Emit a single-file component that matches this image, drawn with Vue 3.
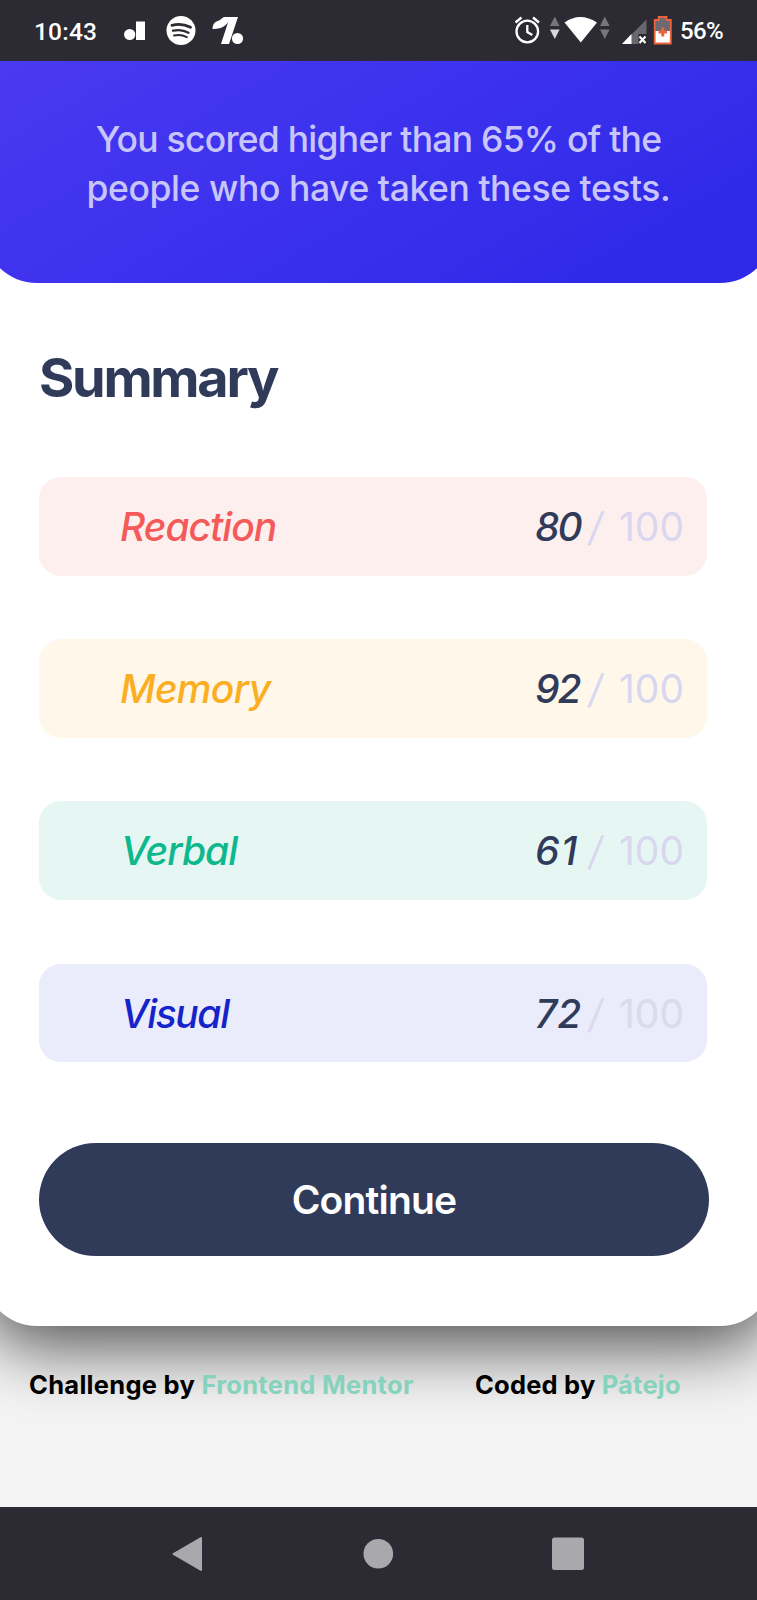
<script setup>
const rows = [
  { name: 'Reaction', score: 80, key: 'reaction' },
  { name: 'Memory', score: 92, key: 'memory' },
  { name: 'Verbal', score: 61, key: 'verbal' },
  { name: 'Visual', score: 72, key: 'visual' },
]
</script>

<template>
  <div class="phone">
    <header class="status">
      <span class="clock">10:43</span>
      <svg class="notif" width="130" height="61" viewBox="0 0 130 61" fill="#fff">
        <circle cx="9.7" cy="34.5" r="5.6" />
        <rect x="16" y="21.5" width="9" height="18.5" />
        <circle cx="61" cy="30.5" r="14.5" />
        <g fill="none" stroke="#2c2a32" stroke-linecap="round">
          <path d="M52 25.3q9.500-2.600 18.500 2" stroke-width="2.800" />
          <path d="M53 30.700q8.500-2 15.500 2" stroke-width="2.300" />
          <path d="M54 35.500q7-1.500 12.800 1.700" stroke-width="1.900" />
        </g>
        <path d="M109.800 17h8.200l-9 27h-8z" />
        <path d="M92.500 29c.3-6 3-7.500 6.500-8.500 2.500-.8 3-3.500 6-3.500h6c-3 7.500-8 12.200-18.500 12z" />
        <circle cx="117.500" cy="38.500" r="5.600" />
      </svg>
      <svg class="system" width="164" height="61" viewBox="0 0 164 61">
        <g fill="none" stroke="#fff" stroke-width="2.300">
          <circle cx="17.300" cy="31.500" r="10.800" />
          <path d="M17.300 25v7l5 3M5.500 22.500l6-5M23 17.500l6 5" />
        </g>
        <path d="M40 26l4.800-9.500 4.800 9.500z" fill="#77767c" />
        <path d="M40 29.500l4.800 9.500 4.800-9.500z" fill="#d9d9dc" />
        <path d="M54.500 22.500q15.500-11 32.500 0L70.800 42.500z" fill="#fff" />
        <path d="M90 26l4.800-9.500 4.800 9.500zM90 29.500l4.800 9.500 4.800-9.500z" fill="#77767c" />
        <path d="M112 44l24.500-24.500V34h-8v10z" fill="#68676d" />
        <path d="M112 44l9.500-10v10z" fill="#fff" />
        <path d="M129.500 36.500l6 6.500m0-6.500l-6 6.500" stroke="#fff" stroke-width="2.100" />
        <path d="M144.500 20h4v-3h8v3h4.500v24h-16.500z" fill="#6c6a70" />
        <path d="M145 31h16v13h-16z" fill="#fff" />
        <path d="M144.700 20h4v-3.200h7.800V20h4.300v23.500h-16.100z" fill="none" stroke="#f0623c" stroke-width="1.800" />
        <path d="M148.500 32h8.500M152.700 27.500v9" stroke="#f0623c" stroke-width="3" />
      </svg>
      <span class="percent">56%</span>
    </header>

    <main class="card">
      <section class="result">
        <p class="l1">You scored higher than 65% of the</p>
        <p class="l2">people who have taken these tests.</p>
      </section>
      <section class="summary">
        <h1>Summary</h1>
        <ul>
          <li v-for="row in rows" :key="row.key" :class="row.key">
            <span class="name">{{ row.name }}</span>
            <span class="score">{{ row.score }}</span>
            <span class="slash">/</span>
            <span class="total">100</span>
          </li>
        </ul>
        <button type="button">Continue</button>
      </section>
    </main>

    <footer class="credits">
      <p class="challenge">Challenge by <a>Frontend Mentor</a></p>
      <p class="coder">Coded by <a>Pátejo</a></p>
    </footer>

    <nav class="navbar">
      <svg width="757" height="93" viewBox="0 0 757 93" fill="#a9a8ac">
        <path d="M173.500 47L201 31v32z" stroke="#a9a8ac" stroke-width="2" stroke-linejoin="round" />
        <circle cx="378.300" cy="46.700" r="14.800" />
        <rect x="552" y="30.500" width="32" height="32.500" rx="2.500" />
      </svg>
    </nav>
  </div>
</template>

<style>
body { margin: 0; background: #f4f4f4; }
</style>

<style scoped>
.phone {
  width: 757px;
  height: 1600px;
  display: flex;
  flex-direction: column;
  overflow: hidden;
  background: #f4f4f4;
  font-family: Inter, "Liberation Sans", sans-serif;
}
p, h1, ul { margin: 0; padding: 0; }
.status {
  z-index: 1;
  flex: none;
  height: 61px;
  display: flex;
  background: #2c2a32;
  color: #fff;
  font: 500 24.500px/63px Roboto, sans-serif;
}
.clock { width: 86px; padding-left: 34px; letter-spacing: .2px; }
.notif { flex: none; }
.system { flex: none; margin-left: 260px; }
.percent { padding-left: 6px; font-size: 24px; letter-spacing: -0.600px; }
.card {
  flex: none;
  height: 1264.500px;
  margin: 0 -17px;
  background: #fff;
  border-radius: 0 0 54px 54px;
  box-shadow: 0 19px 70px rgba(0, 0, 0, .7);
}
.result {
  box-sizing: border-box;
  height: 222.300px;
  padding-top: 55px;
  border-radius: 0 0 54px 54px;
  background: linear-gradient(150deg, #4a39f1 0%, #3b31ed 48%, #2f2ae8 85%);
  color: #c8c5fb;
  text-align: center;
  font-size: 35.500px;
  font-weight: 450;
  line-height: 48.500px;
}
.l1 { letter-spacing: -0.740px; }
.l2 { letter-spacing: -0.430px; }
.summary { padding: 0 49px 0 56px; }
h1 {
  padding-top: 59px;
  height: 134.700px;
  font-size: 54px;
  line-height: 72px;
  font-weight: 650;
  letter-spacing: -2.300px;
  color: #303b5a;
}
ul { list-style: none; display: grid; gap: 63.600px; width: 668px; }
li {
  box-sizing: border-box;
  height: 98.600px;
  border-radius: 22px;
  display: flex;
  padding-left: 81px;
  font-size: 39px;
  line-height: 100px;
}
.name { width: 415px; font-style: italic; font-weight: 500; letter-spacing: -1px; }
.memory .name { letter-spacing: -.700px; }
.verbal .name, .visual .name { width: 414px; padding-left: 1px; letter-spacing: -1px; }
.visual .name { letter-spacing: -1.400px; }
.score { width: 54px; color: #303b5a; font-style: italic; font-weight: 500; letter-spacing: -2px; }
.verbal .score { letter-spacing: 1.500px; }
.visual .score { letter-spacing: 0; }
.slash { width: 30px; transform: skewX(-8deg); }
.slash, .total { color: #d9d7ef; }
.visual .slash, .visual .total { color: #dadaec; }
.reaction { background: #fdefee; color: #f55a5a; }
.memory { background: #fff7e9; color: #fcae22; }
.verbal { background: #e6f7f3; color: #0cb88c; }
.visual { background: #eaebfb; color: #1524c8; }
button {
  display: block;
  width: 670px;
  height: 113px;
  margin-top: 81px;
  padding: 0;
  border: 0;
  border-radius: 57px;
  background: #303b5a;
  color: #fff;
  font: 600 39px/114px Inter, sans-serif;
  letter-spacing: -.800px;
}
.credits {
  display: flex;
  height: 182px;
  padding-top: 42px;
  box-sizing: border-box;
  font-size: 25.500px;
  line-height: 34px;
  font-weight: 700;
  letter-spacing: .280px;
  color: #000;
  z-index: 1;
  white-space: nowrap;
}
.credits a { color: #86d2bd; }
.challenge { width: 446px; padding-left: 29px; }
.coder { letter-spacing: .200px; }
.navbar { z-index: 1; flex: none; height: 93px; background: #2c2a32; }
.navbar svg { display: block; }
</style>
